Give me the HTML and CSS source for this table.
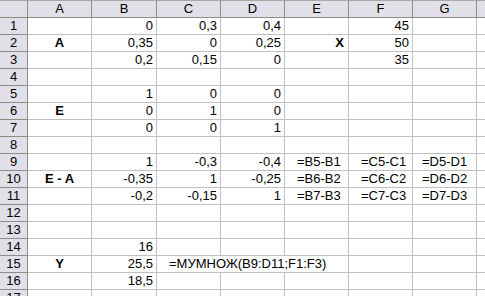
FILE: index.html
```html
<!DOCTYPE html>
<html>
<head>
<meta charset="utf-8">
<link rel="stylesheet" href="styles.css">
</head>
<body>
<div class="sheet">
  <div class="row head">
    <div class="c corner"></div><div class="c ch">A</div><div class="c ch">B</div><div class="c ch">C</div><div class="c ch">D</div><div class="c ch">E</div><div class="c ch">F</div><div class="c ch">G</div><div class="c ch last"></div>
  </div>
  <div class="row">
    <div class="c rh">1</div><div class="c"></div><div class="c n">0</div><div class="c n">0,3</div><div class="c n">0,4</div><div class="c"></div><div class="c n">45</div><div class="c"></div><div class="c last"></div>
  </div>
  <div class="row">
    <div class="c rh">2</div><div class="c lbl">A</div><div class="c n">0,35</div><div class="c n">0</div><div class="c n">0,25</div><div class="c lbl r">X</div><div class="c n">50</div><div class="c"></div><div class="c last"></div>
  </div>
  <div class="row">
    <div class="c rh">3</div><div class="c"></div><div class="c n">0,2</div><div class="c n">0,15</div><div class="c n">0</div><div class="c"></div><div class="c n">35</div><div class="c"></div><div class="c last"></div>
  </div>
  <div class="row">
    <div class="c rh">4</div><div class="c"></div><div class="c"></div><div class="c"></div><div class="c"></div><div class="c"></div><div class="c"></div><div class="c"></div><div class="c last"></div>
  </div>
  <div class="row">
    <div class="c rh">5</div><div class="c"></div><div class="c n">1</div><div class="c n">0</div><div class="c n">0</div><div class="c"></div><div class="c"></div><div class="c"></div><div class="c last"></div>
  </div>
  <div class="row">
    <div class="c rh">6</div><div class="c lbl">E</div><div class="c n">0</div><div class="c n">1</div><div class="c n">0</div><div class="c"></div><div class="c"></div><div class="c"></div><div class="c last"></div>
  </div>
  <div class="row">
    <div class="c rh">7</div><div class="c"></div><div class="c n">0</div><div class="c n">0</div><div class="c n">1</div><div class="c"></div><div class="c"></div><div class="c"></div><div class="c last"></div>
  </div>
  <div class="row">
    <div class="c rh">8</div><div class="c"></div><div class="c"></div><div class="c"></div><div class="c"></div><div class="c"></div><div class="c"></div><div class="c"></div><div class="c last"></div>
  </div>
  <div class="row">
    <div class="c rh">9</div><div class="c"></div><div class="c n">1</div><div class="c n">-0,3</div><div class="c n">-0,4</div><div class="c f">=B5-B1</div><div class="c f">=C5-C1</div><div class="c f g">=D5-D1</div><div class="c last"></div>
  </div>
  <div class="row">
    <div class="c rh">10</div><div class="c lbl">E - A</div><div class="c n">-0,35</div><div class="c n">1</div><div class="c n">-0,25</div><div class="c f">=B6-B2</div><div class="c f">=C6-C2</div><div class="c f g">=D6-D2</div><div class="c last"></div>
  </div>
  <div class="row">
    <div class="c rh">11</div><div class="c"></div><div class="c n">-0,2</div><div class="c n">-0,15</div><div class="c n">1</div><div class="c f">=B7-B3</div><div class="c f">=C7-C3</div><div class="c f g">=D7-D3</div><div class="c last"></div>
  </div>
  <div class="row">
    <div class="c rh">12</div><div class="c"></div><div class="c"></div><div class="c"></div><div class="c"></div><div class="c"></div><div class="c"></div><div class="c"></div><div class="c last"></div>
  </div>
  <div class="row">
    <div class="c rh">13</div><div class="c"></div><div class="c"></div><div class="c"></div><div class="c"></div><div class="c"></div><div class="c"></div><div class="c"></div><div class="c last"></div>
  </div>
  <div class="row">
    <div class="c rh">14</div><div class="c"></div><div class="c n">16</div><div class="c"></div><div class="c"></div><div class="c"></div><div class="c"></div><div class="c"></div><div class="c last"></div>
  </div>
  <div class="row">
    <div class="c rh">15</div><div class="c lbl">Y</div><div class="c n">25,5</div><div class="c f span3">=МУМНОЖ(B9:D11;F1:F3)</div><div class="c"></div><div class="c"></div><div class="c last"></div>
  </div>
  <div class="row">
    <div class="c rh">16</div><div class="c"></div><div class="c n">18,5</div><div class="c"></div><div class="c"></div><div class="c"></div><div class="c"></div><div class="c"></div><div class="c last"></div>
  </div>
  <div class="row">
    <div class="c rh">17</div><div class="c"></div><div class="c"></div><div class="c"></div><div class="c"></div><div class="c"></div><div class="c"></div><div class="c"></div><div class="c last"></div>
  </div>
</div>
</body>
</html>
```

FILE: styles.css
```css
html, body {
  margin: 0;
  padding: 0;
  background: #ffffff;
  overflow: hidden;
}

.sheet {
  display: flex;
  flex-direction: column;
  width: 485px;
  height: 296px;
  overflow: hidden;
  font-family: "Liberation Sans", Arial, sans-serif;
  font-size: 13px;
  color: #000000;
}

.row {
  display: grid;
  grid-template-columns: 28px 64px 65px 64px 64px 64px 64px 64px 8px;
  height: 17px;
  flex: none;
}

.c {
  box-sizing: border-box;
  height: 17px;
  border-right: 1px solid #c0c0c0;
  border-bottom: 1px solid #c0c0c0;
  line-height: 16px;
  white-space: nowrap;
  overflow: hidden;
}

.c.last {
  border-right: none;
}

.head {
  height: 18px;
}

.head .c {
  height: 18px;
  border-top: 1px solid #a9a9a4;
  border-right: 1px solid #8e8d84;
  border-bottom: 1px solid #8e8d84;
  background: #e1e0e8;
  text-align: center;
  line-height: 16px;
}

.head .c.last {
  border-right: none;
}

.rh {
  background: #e1e0e8;
  text-align: center;
  border-right: 1px solid #8e8d84;
  border-bottom: 1px solid #8e8d84;
}

.n {
  text-align: right;
  padding-right: 3px;
}

.lbl {
  text-align: center;
  font-weight: bold;
}

.lbl.r {
  text-align: right;
  padding-right: 4px;
}

.f {
  padding-left: 12px;
}

.f.g {
  padding-left: 9px;
}

.span3 {
  grid-column: span 3;
  overflow: visible;
}
```
